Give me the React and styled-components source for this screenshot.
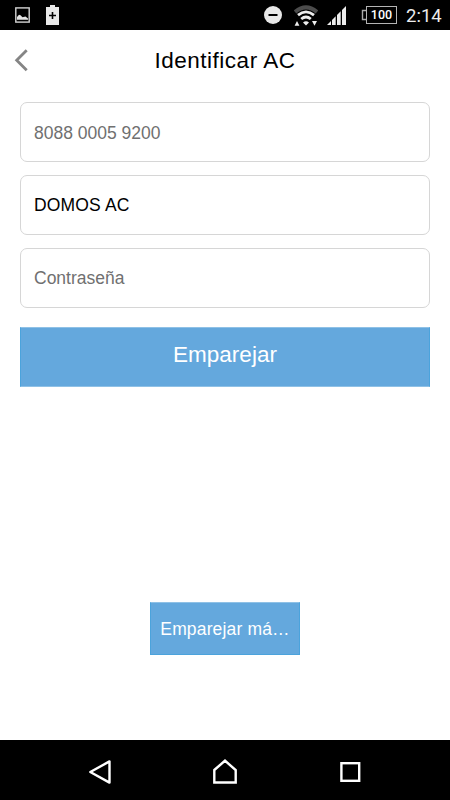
import React, { useState } from 'react';
import styled, { createGlobalStyle } from 'styled-components';

const App = () => {

  const [name, setName] = useState('DOMOS AC');

  return (
    <Screen>
      <GlobalStyle />
      <StatusBar>
        <Notifications>
          <PictureIcon />
          <BatterySaverIcon />
        </Notifications>
        <SystemIcons>
          <DoNotDisturbIcon />
          <WifiIcon />
          <SignalIcon />
          <BatteryTip />
          <Battery>100</Battery>
          <Clock>2:14</Clock>
        </SystemIcons>
      </StatusBar>
      <Header>
        <BackButton aria-label='Volver'>
          <svg width='16' height='24' viewBox='0 0 16 24'>
            <path d='M13.7 2.3 L3.7 12.3 L13.7 22.3' fill='none' stroke='#858585' strokeWidth='2.8' />
          </svg>
        </BackButton>
        <Title>Identificar AC</Title>
      </Header>
      <Form>
        <Field placeholder='8088 0005 9200' />
        <Field value={name} onChange={(e) => setName(e.target.value)} $spacing='0.15px' />
        <Field placeholder='Contraseña' />
        <PairButton>Emparejar</PairButton>
      </Form>
      <PairMoreButton>Emparejar má…</PairMoreButton>
      <NavBar>
        <NavButton aria-label='Atrás'>
          <svg width='26' height='28' viewBox='0 0 26 28'>
            <path d='M22.5 3.4 V24.6 L3.3 14 Z' fill='none' stroke='#fff' strokeWidth='2.4' strokeLinejoin='round' />
          </svg>
        </NavButton>
        <NavButton aria-label='Inicio'>
          <svg width='26' height='28' viewBox='0 0 26 28'>
            <path d='M2.3 12 L13 2.7 L23.7 12 V24.5 H2.3 Z' fill='none' stroke='#fff' strokeWidth='2.4' />
          </svg>
        </NavButton>
        <NavButton aria-label='Recientes'>
          <svg width='26' height='28' viewBox='0 0 26 28'>
            <rect x='4.4' y='5.2' width='17.8' height='17.6' fill='none' stroke='#fff' strokeWidth='2.4' />
          </svg>
        </NavButton>
      </NavBar>
    </Screen>
  )
}

export default App;

const PictureIcon = () => (
  <svg width='15' height='16' viewBox='0 0 15 16'>
    <rect x='0.8' y='0.9' width='13.4' height='14.2' fill='none' stroke='#d4d4d4' strokeWidth='1.4' />
    <path d='M2 12.7 V10 L4 7.8 L5.5 8.2 L7.5 10.2 L10.5 9.6 L13 11.5 V12.7 Z' fill='#e4e4e4' />
  </svg>
)

const BatterySaverIcon = () => (
  <svg width='13' height='20' viewBox='0 0 13 20'>
    <path d='M4 0 H9 V2 H13 V20 H0 V2 H4 Z' fill='#e8e8e8' />
    <path d='M6.5 7 V14 M3 10.5 H10' stroke='#000' strokeWidth='1.6' />
  </svg>
)

const DoNotDisturbIcon = () => (
  <svg width='18' height='18' viewBox='0 0 18 18'>
    <circle cx='9' cy='9' r='9' fill='#e8e8e8' />
    <rect x='4.5' y='8' width='9' height='2' fill='#000' />
  </svg>
)

const WifiIcon = () => (
  <svg width='24' height='22' viewBox='0 0 24 22'>
    <path d='M1 7 Q12 -2.2 23 7' fill='none' stroke='#4c4c4c' strokeWidth='4' />
    <path d='M4 10.2 Q12 3.6 20 10.2' fill='none' stroke='#ededed' strokeWidth='2.8' />
    <path d='M7.2 14 Q12 10 16.8 14' fill='none' stroke='#ededed' strokeWidth='2.8' />
    <path d='M9 17.4 Q12 15 15 17.4 L12 20.6 Z' fill='#ededed' />
    <path d='M3 16 L5.4 20.8 H0.6 Z M18 16 H23 L20.5 20.8 Z' fill='#ededed' />
  </svg>
)

const SignalIcon = () => (
  <svg width='19' height='19' viewBox='0 0 19 19'>
    <path d='M0 19 L4 15 V19 Z M5 14 L8.7 10.3 V19 H5 Z M10 9 L13.7 5.3 V19 H10 Z M15 4 L19 0 V19 H15 Z' fill='#ededed' />
  </svg>
)

const BatteryTip = () => (
  <svg width='5' height='18' viewBox='0 0 5 18'>
    <path d='M5 4.5 H1.5 V13.5 H5' fill='none' stroke='#aaa' strokeWidth='1.4' />
  </svg>
)

const GlobalStyle = createGlobalStyle`
*{
  box-sizing:border-box;
}

body{
  margin:0;
  background:white;
}
`;

const Screen = styled.div`
width:450px;
height:800px;
display:flex;
flex-direction:column;
overflow:hidden;
background:white;
font-family:'Liberation Sans', Arial, sans-serif;
`;

const StatusBar = styled.div`
height:30px;
flex:none;
display:flex;
align-items:center;
justify-content:space-between;
padding:0 8px 0 15px;
background:black;
color:white;
`;

const Notifications = styled.div`
display:flex;
align-items:center;
gap:16px;
`;

const SystemIcons = styled.div`
display:flex;
align-items:center;

svg:nth-child(2){
  margin-left:12px;
  margin-top:2px;
}

svg:nth-child(3){
  margin-left:9px;
  margin-top:1px;
}

svg:nth-child(4){
  margin-left:15px;
}
`;

const Battery = styled.div`
width:31px;
height:18px;
border:1.5px solid #b4b4b4;
display:flex;
align-items:center;
justify-content:center;
font-family:Roboto, sans-serif;
font-size:12.5px;
font-weight:500;
line-height:1;
`;

const Clock = styled.div`
width:36px;
margin-left:9px;
font-family:Roboto, sans-serif;
font-size:18.5px;
line-height:30px;
padding-top:1px;
color:#ededed;
white-space:nowrap;
`;

const Header = styled.div`
height:60px;
flex:none;
display:grid;
grid-template-columns:40px 1fr 40px;
align-items:center;
`;

const BackButton = styled.button`
display:flex;
padding:0 0 0 13px;
border:none;
background:none;
cursor:pointer;
`;

const Title = styled.h1`
margin:0;
padding-top:2px;
text-align:center;
font-size:22.5px;
font-weight:400;
line-height:58px;
letter-spacing:0.5px;
color:black;
`;

const Form = styled.div`
display:flex;
flex-direction:column;
padding:12.4px 20px 0;
`;

const Field = styled.input`
width:100%;
height:60px;
margin-bottom:12.7px;
padding:1.4px 13px 0;
border:1px solid #d6d6d6;
border-radius:7px;
outline:none;
background:white;
font-family:inherit;
font-size:17.5px;
letter-spacing:${props => props.$spacing || '0'};
color:black;

&::placeholder{
  color:#707070;
  opacity:1;
}
`;

const BlueButton = styled.button`
border:1px solid #4ba3dc;
border-top-color:#8fc1e6;
background:#64a8dd;
color:white;
font-family:inherit;
cursor:pointer;
`;

const PairButton = styled(BlueButton)`
height:60px;
margin-top:6.8px;
padding:0 0 4px;
border-bottom-color:#8fc1e6;
font-size:22.5px;
`;

const PairMoreButton = styled(BlueButton)`
width:150px;
height:53px;
flex:none;
margin:215px auto 0;
padding:1px 0 0;
font-size:17.5px;
letter-spacing:0.15px;
white-space:nowrap;
`;

const NavBar = styled.div`
height:60px;
flex:none;
margin-top:auto;
padding:4px 37px 0;
display:grid;
grid-template-columns:repeat(3, 1fr);
align-items:center;
background:black;
`;

const NavButton = styled.button`
display:flex;
justify-content:center;
padding:0;
border:none;
background:none;
cursor:pointer;
`;
